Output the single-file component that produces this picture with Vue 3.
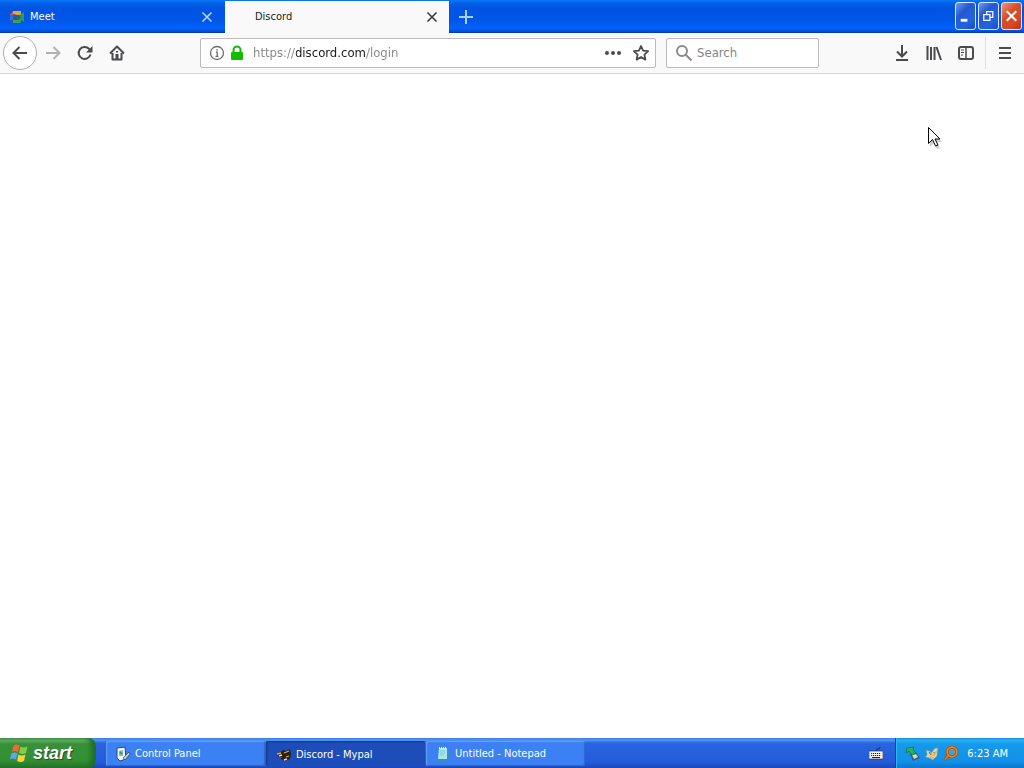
<script setup>
import { ref } from 'vue'

const url = ref('https://discord.com/login')
const query = ref('')
</script>

<template>
  <div class="desktop">
    <header class="tabs">
      <div class="tab">
        <svg class="favicon" viewBox="0 0 16 16">
          <path d="M4 2h8v4H8L4 5z" fill="#e8a33a" />
          <path d="M4 2v4H1z" fill="#d9534a" />
          <path d="M1 6h3v5H1z" fill="#2f6fe0" />
          <path d="M1 11h3v3H2q-1 0-1-1z" fill="#2457b8" />
          <path d="M4 11h5l3-2v4q0 1-1 1H4z" fill="#35a556" />
          <path d="M12 5l3-2v10l-3-2-3-3z" fill="#2f9a55" />
          <path d="M4 6h5l3 2-3 3H4z" fill="#2a5f8a" />
        </svg>
        <span class="tab-title">Meet</span>
        <button class="tab-close" aria-label="Close Meet">
          <svg viewBox="0 0 12 12"><path d="M1.500 1.500l9 9M10.500 1.500l-9 9" /></svg>
        </button>
      </div>
      <div class="tab active">
        <span class="favicon"></span>
        <span class="tab-title">Discord</span>
        <button class="tab-close" aria-label="Close Discord">
          <svg viewBox="0 0 12 12"><path d="M1.500 1.500l9 9M10.500 1.500l-9 9" /></svg>
        </button>
      </div>
      <button class="new-tab" aria-label="New tab">
        <svg viewBox="0 0 14 14"><path d="M7 0v14M0 7h14" /></svg>
      </button>
      <div class="window-controls">
        <button aria-label="Minimize"><svg viewBox="0 0 20 26"><path d="M5 17.500h7" stroke-width="3" /></svg></button>
        <button aria-label="Restore"><svg viewBox="0 0 20 26"><path d="M5 11.500h6.500v6H5zM4.500 11.500h7.500M8 11V8.500h6.500v6H12M7.500 8.500h7.500" stroke-width="1.300" /></svg></button>
        <button class="quit" aria-label="Close window"><svg viewBox="0 0 20 26"><path d="M5 8l10 10M15 8L5 18" stroke-width="2.200" /></svg></button>
      </div>
    </header>

    <nav class="toolbar">
      <button class="tool back" aria-label="Back">
        <svg viewBox="0 0 16 16"><path d="M15 8H2M7.500 2L1.500 8l6 6" /></svg>
      </button>
      <button class="tool forward" aria-label="Forward">
        <svg viewBox="0 0 16 16"><path d="M1 8h13M8.500 2l6 6-6 6" /></svg>
      </button>
      <button class="tool" aria-label="Reload">
        <svg viewBox="0 0 16 16"><path d="M13.500 9.500A6 6 0 1 1 12 3.700l1.500 1.500" /><path class="solid" d="M15.500 1v6.500H9z" /></svg>
      </button>
      <button class="tool" aria-label="Home">
        <svg viewBox="0 0 16 16"><path d="M1 8.500l7-7 7 7M3.500 8v6.500h9V8" stroke-linejoin="round" /><path class="solid" d="M6.500 9h3v6h-3zM7 6h2v1.500H7z" /></svg>
      </button>

      <div class="fields">
        <div class="field address">
          <svg class="info" viewBox="0 0 16 16"><circle cx="8" cy="8" r="6.500" /><path d="M7 7.200h1.200v4M6.500 11.400h3M7.200 4.800h1.600" /></svg>
          <svg class="lock" viewBox="0 0 14 16"><path d="M3.500 8V5a3.500 3.500 0 0 1 7 0v3" fill="none" stroke="#12bc00" stroke-width="2" /><rect x="1" y="7" width="12" height="8" rx="1" fill="#12bc00" /></svg>
          <input v-model="url" class="url" type="text" aria-label="Address" spellcheck="false" />
          <button class="inline" aria-label="Page actions">
            <svg viewBox="0 0 16 16"><circle class="solid" cx="2" cy="8" r="2" /><circle class="solid" cx="8" cy="8" r="2" /><circle class="solid" cx="14" cy="8" r="2" /></svg>
          </button>
          <button class="inline" aria-label="Bookmark this page">
            <svg viewBox="0 0 16 16"><path d="M8 1l2.100 4.600 5 .6-3.700 3.400 1 5L8 12.100l-4.400 2.500 1-5L.9 6.200l5-.6z" stroke-linejoin="round" stroke-width="1.800" /></svg>
          </button>
        </div>
        <div class="field search">
          <svg viewBox="0 0 18 18"><circle cx="7" cy="7" r="5" /><path d="M10.500 10.500L16.500 16.500" /></svg>
          <input v-model="query" type="text" placeholder="Search" aria-label="Search" />
        </div>
      </div>

      <button class="tool" aria-label="Downloads">
        <svg viewBox="0 0 16 16"><path d="M8 0v11M3 6.500l5 5 5-5M2 15h12" /></svg>
      </button>
      <button class="tool" aria-label="Library">
        <svg viewBox="0 0 16 16"><path d="M1.500 1v14M5 2v13M8.500 2v13M10.500 2l4.500 13" /></svg>
      </button>
      <button class="tool" aria-label="Sidebars">
        <svg viewBox="0 0 16 16"><rect x="1" y="2" width="14" height="12" rx="2" /><path d="M8 2v12" stroke-width="1.500" /><path d="M3 5h3M3 7.500h3M3 10h2" stroke-width="1" /></svg>
      </button>
      <div class="menu-slot">
        <button class="tool" aria-label="Menu">
          <svg viewBox="0 0 16 16"><path d="M2 3h12M2 8h12M2 13h12" /></svg>
        </button>
      </div>
    </nav>

    <main class="page"></main>

    <footer class="taskbar">
      <button class="start">
        <svg viewBox="0 0 20 20">
          <path d="M4.500 2.500q3-2 6 0L9 9q-3-2-6 0z" fill="#ef6a36" />
          <path d="M11.500 3.500q3 2 7 0L17 10q-3 2-7 0z" fill="#82cf46" />
          <path d="M2.500 10.500q3-2 6 0L7 16.500q-3-2-6 0z" fill="#64a2f4" />
          <path d="M9.500 11.500q3 2 7 0L15 18q-3 2-7 0z" fill="#f8d43b" />
        </svg>
        <span>start</span>
      </button>
      <div class="tasks">
        <button class="task">
          <svg viewBox="0 0 16 16"><path d="M2 2l8-1 1 12-6 2-3-3z" fill="#eef6f8" stroke="#24487f" /><path d="M4 5l4-1v6H4z" fill="#7dbccb" /><path d="M8 12l6-6 1 2-5 6z" fill="#c8d0cc" stroke="#303f51" stroke-width=".7" /><path d="M5 6l2 2" stroke="#3b9d50" stroke-width="2" /></svg>
          <span>Control Panel</span>
        </button>
        <button class="task pressed">
          <svg viewBox="0 0 16 16"><path d="M1 6l4-1 2-2 3 1 4-2 1 5-1 5-5 2-4-2 1-2-4 0z" fill="#282019" /><path d="M1 7l4-1M8 6l5-2M10 10l3-1" stroke="#e6a84c" stroke-width="1.300" /><path d="M3 9l3-1M8 13l3-1" stroke="#e5dfd1" stroke-width="1.500" /></svg>
          <span>Discord - Mypal</span>
        </button>
        <button class="task">
          <svg viewBox="0 0 16 16"><path d="M5 2l8 1 2 10-3 2H2L3 3z" fill="#3b8dbb" /><path d="M4 2h8v11H3z" fill="#a9e5f2" /><path d="M5 5h5M5 7h5M5 9h4" stroke="#7cc8e0" /><path d="M4 2h8" stroke="#e7f7fa" stroke-width="2" stroke-dasharray="1 1" /></svg>
          <span>Untitled - Notepad</span>
        </button>
      </div>
      <button class="keyboard" aria-label="Keyboard">
        <svg viewBox="0 0 14 14"><path d="M7 4q0-2 2-2t2-2" fill="none" stroke="#142b69" /><path d="M0 4h14v8H0z" fill="#f3f2ed" stroke="#242424" stroke-width=".6" /><path d="M2 6.500h10M2 8.500h10" stroke="#242424" stroke-width="1.200" stroke-dasharray="1.200 .8" /><path d="M3 10.500h8" stroke="#242424" /></svg>
      </button>
      <div class="tray">
        <svg viewBox="0 0 16 16"><path d="M5 8l6-2 4 6-7 3z" fill="#42586c" /><path d="M7 9l4-1 2 3-4 2z" fill="#c3dbdf" /><path d="M2 2l7-1-1 3 3 3-4 2-3-4-3 2z" fill="#28b94c" stroke="#176c39" stroke-width=".7" /></svg>
        <svg viewBox="0 0 16 16"><path d="M2 4l4 1 1 2 4-5 3 0-1 8-4 4-4-2-4-1 2-2z" fill="#d3d5c4" stroke="#71848a" stroke-width=".6" /><path d="M7 8l3 1 3-4M6 11l4 1" stroke="#e5bb34" stroke-width="1.800" fill="none" /><path d="M5 6l2 3M10 6v1" stroke="#54666c" /></svg>
        <svg viewBox="0 0 16 16"><path d="M6 9l-4.500 5" stroke="#b24f0b" stroke-width="3" /><circle cx="9" cy="6" r="4.800" fill="#4a9fc6" stroke="#a94708" stroke-width="3" /><circle cx="9" cy="6" r="4.800" fill="none" stroke="#f0831d" stroke-width="1.800" /><path d="M6 9l-4 4.500" stroke="#ea7a1a" stroke-width="1.500" /></svg>
        <time>6:23 AM</time>
      </div>
    </footer>

    <svg class="cursor" viewBox="0 0 16 24"><path d="M3 4l12 12h-5l3 6-3 1-3-6-4 4z" fill="#0003" stroke="none" /><path d="M1.500 1.500v16l4-4 3 6.500 2.500-1-3-6h5z" fill="#fff" stroke="#000" /></svg>
  </div>
</template>

<style>
body {
  margin: 0;
}
</style>

<style scoped>
.desktop {
  position: relative;
  display: flex;
  flex-direction: column;
  height: 100vh;
  overflow: hidden;
  background: #fff;
  font: 11px/16px "DejaVu Sans Condensed", "DejaVu Sans", sans-serif;
}
button {
  margin: 0;
  padding: 0;
  border: 0;
  background: none;
  color: inherit;
  font: inherit;
}
svg {
  display: block;
  flex: none;
  width: 16px;
  height: 16px;
}
.tabs {
  display: flex;
  flex: none;
  gap: 1px;
  height: 33px;
  box-sizing: border-box;
  background: linear-gradient(#0878f8 0, #0562e8 3px, #0054e3 8px, #0056e7 20px, #0262fc 28px, #0253df 31px, #0036a4 33px);
}
.tab {
  display: flex;
  align-items: center;
  flex: 0 1 224px;
  box-sizing: border-box;
  padding: 1px 11px 0 9px;
  color: #fff;
}
.tab.active {
  margin-top: 1px;
  padding-top: 0;
  background: #f9f9fa;
  color: #18191a;
}
.favicon {
  width: 16px;
  height: 16px;
  margin-right: 5px;
}
.tab-title {
  flex: 1;
}
.tab-close svg {
  width: 12px;
  height: 12px;
  fill: none;
  stroke: #b7d5ff;
  stroke-width: 1.6;
}
.active .tab-close svg {
  stroke: #3c3d40;
}
.new-tab {
  padding: 0 9px;
}
.new-tab svg {
  width: 14px;
  height: 14px;
  stroke: #a9d0ff;
  stroke-width: 2;
}
.window-controls {
  display: flex;
  align-items: flex-start;
  gap: 2px;
  margin-left: auto;
  padding: 2px 2px 0 0;
}
.window-controls button {
  width: 21px;
  height: 28px;
  box-sizing: border-box;
  border: 1px solid #dce8ff;
  border-radius: 3px;
  background: linear-gradient(135deg, #6d9bf1, #2458d4 35%, #2463df 70%, #174cc3);
}
.window-controls .quit {
  background: linear-gradient(135deg, #ee967b, #da4c26 40%, #d84a24 70%, #b63213);
}
.window-controls svg {
  width: 19px;
  height: 26px;
  fill: none;
  stroke: #fff;
}
.toolbar {
  display: flex;
  flex: none;
  align-items: center;
  height: 41px;
  box-sizing: border-box;
  padding: 0 3px;
  border-bottom: 1px solid #d8d8da;
  background: #f9f9fa;
}
.tool {
  display: grid;
  place-items: center;
  width: 32px;
  height: 32px;
}
.tool svg,
.inline svg {
  fill: none;
  stroke: #4b4b4d;
  stroke-width: 2;
}
.tool .solid,
.inline .solid {
  fill: #4b4b4d;
  stroke: none;
}
.tool.back {
  width: 34px;
  height: 34px;
  box-sizing: border-box;
  border: 1px solid #b0b0b2;
  border-radius: 50%;
  background: #fff;
}
.tool.forward svg {
  stroke: #b2b2b4;
}
.fields {
  display: flex;
  flex: 1;
  gap: 10px;
  padding: 0 67px;
}
.field {
  display: flex;
  align-items: center;
  height: 30px;
  box-sizing: border-box;
  border: 1px solid #bbbbbd;
  border-radius: 2px;
  background: #fff;
}
.address {
  flex: 1;
  padding: 0 0 0 8px;
}
.search {
  flex: 0 1 153px;
  padding: 0 8px;
}
.info {
  fill: none;
  stroke: #6e6e70;
  stroke-width: 1.3;
}
.lock {
  width: 14px;
  margin: 0 9px 0 5px;
}
.field input {
  flex: 1;
  width: 0;
  min-width: 0;
  height: 20px;
  padding: 0;
  border: 0;
  outline: 0;
  background: none;
  color: #202022;
  font: 13px/20px "DejaVu Sans Condensed", "DejaVu Sans", sans-serif;
}
.field .url {
  background: linear-gradient(90deg, #858587 43px, #18191a 43px 113px, #858587 113px);
  background-clip: text;
  -webkit-text-fill-color: transparent;
}
.field input::placeholder {
  color: #858587;
  opacity: 1;
}
.inline {
  display: grid;
  place-items: center;
  width: 28px;
  height: 28px;
}
.search svg {
  width: 18px;
  height: 18px;
  margin-right: 4px;
  fill: none;
  stroke: #8b8b8d;
  stroke-width: 2;
}
.menu-slot {
  margin-left: 3px;
  border-left: 1px solid #dededf;
}
.menu-slot .tool {
  width: 35px;
  padding-left: 2px;
}
.page {
  flex: 1;
  background: #fff;
}
.taskbar {
  display: flex;
  flex: none;
  height: 30px;
  background: linear-gradient(#3577e7 0, #5597f3 2px, #2965df 5px, #245bdc 24px, #1b47b7 30px);
  color: #fff;
}
.start {
  display: flex;
  align-items: center;
  width: 96px;
  padding-left: 9px;
  gap: 4px;
  border-radius: 0 8px 8px 0;
  background: linear-gradient(#57a657 0, #69b768 2px, #398f3a 6px, #329133 22px, #277329 30px);
  box-shadow: inset -5px 0 5px #1e6f28;
  font: italic bold 18px/24px "Liberation Sans", Arial, sans-serif;
  text-shadow: 1px 1px 1px #244c24;
}
.start svg {
  width: 20px;
  height: 20px;
}
.tasks {
  display: flex;
  flex: 1;
  align-items: center;
  gap: 1px;
  padding: 1px 0 0 10px;
}
.task {
  display: flex;
  align-items: center;
  flex: 0 1 159px;
  height: 25px;
  box-sizing: border-box;
  padding: 0 9px;
  gap: 4px;
  border-radius: 2px;
  background: #3c81f3;
  box-shadow: inset 1px 1px 1px #65a1f8, inset -1px -1px 1px #2c65d2;
  white-space: nowrap;
}
.task.pressed {
  padding: 2px 9px 0 10px;
  background: #1d4db9;
  box-shadow: inset 1px 1px 2px #143783;
}
.keyboard {
  padding: 2px 12px 0 0;
}
.keyboard svg {
  width: 14px;
  height: 14px;
}
.tray {
  display: flex;
  align-items: center;
  gap: 3px;
  padding: 1px 16px 0 9px;
  border-left: 1px solid #134395;
  background: linear-gradient(#1681df 0, #29b1f4 2px, #159aec 6px, #1290e8 24px, #0d72cc 30px);
  box-shadow: inset 1px 0 1px #2ebcf4;
}
.tray time {
  margin-left: 5px;
}
.cursor {
  position: absolute;
  left: 90.5%;
  top: 126px;
  width: 16px;
  height: 24px;
  pointer-events: none;
}
</style>
